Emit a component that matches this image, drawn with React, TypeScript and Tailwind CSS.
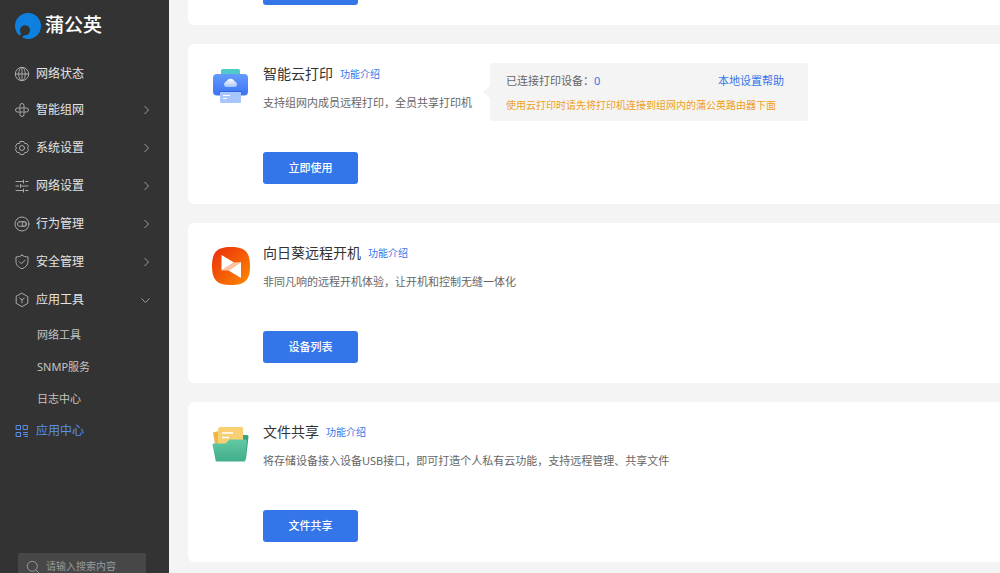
import { type ReactNode } from "react"

interface IconProps {
  children: ReactNode
}

interface NavItem {
  label: string
  icon: ReactNode
  arrow?: "right" | "down"
}

interface AppCardProps {
  icon: ReactNode
  title: string
  desc: string
  action: string
  children?: ReactNode
}

function LineIcon({ children }: IconProps) {
  return (
    <svg
      viewBox="0 0 16 16"
      className="size-4 shrink-0"
      fill="none"
      stroke="currentColor"
      strokeWidth="1"
      strokeLinecap="round"
      strokeLinejoin="round"
      aria-hidden="true"
    >
      {children}
    </svg>
  )
}

const navItems: NavItem[] = [
  {
    label: "智能组网",
    arrow: "right",
    icon: (
      <LineIcon>
        <path d="M6 8.500V3.500a2 2 0 0 1 4 0V6M7.500 6h5a2 2 0 0 1 0 4H10M10 7.500v5a2 2 0 0 1-4 0V10M8.500 10h-5a2 2 0 0 1 0-4H6" />
      </LineIcon>
    ),
  },
  {
    label: "系统设置",
    arrow: "right",
    icon: (
      <LineIcon>
        <path d="M6.300 1.500h3.400l1 2 2.200.1 1.700 2.900-1.200 1.500 1.200 1.500-1.700 2.900-2.200.1-1 2H6.300l-1-2-2.200-.1-1.700-2.900L2.600 8 1.400 6.500l1.700-2.900 2.200-.1z" />
        <circle cx="8" cy="8" r="2.500" />
      </LineIcon>
    ),
  },
  {
    label: "网络设置",
    arrow: "right",
    icon: (
      <LineIcon>
        <path d="M2 3.500h7M11.500 3.500H14M9.500 2v3M2 8h2.500M7 8h7M6.500 6.500v3M2 12.500h7M11.500 12.500H14M9.500 11v3" />
      </LineIcon>
    ),
  },
  {
    label: "行为管理",
    arrow: "right",
    icon: (
      <LineIcon>
        <circle cx="8" cy="8" r="7" />
        <rect x="3.500" y="5.700" width="9" height="4.600" rx="2.300" />
        <circle cx="10.200" cy="8" r="2.200" />
      </LineIcon>
    ),
  },
  {
    label: "安全管理",
    arrow: "right",
    icon: (
      <LineIcon>
        <path d="M8 1.200c1.600 1.200 3.600 1.700 6 1.700v4.600c0 3.400-2.200 5.800-6 7.300-3.800-1.500-6-3.900-6-7.300V2.900c2.400 0 4.400-.5 6-1.700z" />
        <path d="M5.400 7.800l2 2L11 6.200" />
      </LineIcon>
    ),
  },
  {
    label: "应用工具",
    arrow: "down",
    icon: (
      <LineIcon>
        <path d="M8 1.300l5.800 3.300v6.800L8 14.700l-5.800-3.300V4.600z" />
        <path d="M5.800 6.200L8 7.800l2.200-1.600M8 7.800v3" />
      </LineIcon>
    ),
  },
]

const subItems = ["网络工具", "SNMP服务", "日志中心"]

function Arrow({ dir }: { dir: "right" | "down" }) {
  return (
    <svg
      viewBox="0 0 10 10"
      className="ml-auto size-[10px]"
      fill="none"
      stroke="#a0a0a0"
      aria-hidden="true"
    >
      {dir === "right" ? <path d="M3.500 1l4 4-4 4" /> : <path d="M0.500 3.500l4 4 4-4" />}
    </svg>
  )
}

function NavLink({ label, icon, arrow }: NavItem) {
  return (
    <a href="#" className="flex h-full items-center pr-[18px] pl-[14px]">
      <span className="text-[#aaaaaa]">{icon}</span>
      <span className="ml-[6px]">{label}</span>
      {arrow && <Arrow dir={arrow} />}
    </a>
  )
}

function Sidebar() {
  return (
    <aside className="flex w-[169px] shrink-0 flex-col bg-[#333333] text-xs text-[#e4e4e4]">
      <div className="flex h-14 shrink-0 items-center gap-1 pb-1 pl-[15px]">
        <svg viewBox="0 0 26 26" className="size-[26px]" aria-hidden="true">
          <path
            fill="#0d80e0"
            d="M3.200 21.500A13 13 0 1 1 8.300 25.100C7.300 24.600 7.800 22.500 9.500 22.300A5 5 0 1 0 5.200 18.500C5.400 20 6.300 20.800 5.800 21.600C5.200 22.600 3.900 22.300 3.200 21.500Z"
          />
        </svg>
        <span className="text-[19px] font-medium text-white">蒲公英</span>
      </div>

      <nav className="shrink-0">
        <ul>
          <li className="h-[35px]">
            <NavLink
              label="网络状态"
              icon={
                <LineIcon>
                  <circle cx="8" cy="8" r="6.700" />
                  <ellipse cx="8" cy="8" rx="3.300" ry="6.700" />
                  <path d="M1.300 8h13.400M8 1.300v13.400" />
                </LineIcon>
              }
            />
          </li>
          {navItems.map((item) => (
            <li key={item.label} className="h-[38px]">
              <NavLink {...item} />
            </li>
          ))}
          {subItems.map((label) => (
            <li key={label} className="h-8">
              <a href="#" className="flex h-full items-center pl-[37px] text-[11px] text-[#c4c4c4]">
                {label}
              </a>
            </li>
          ))}
          <li className="h-8">
            <a href="#" className="flex h-full items-center pl-[14px] text-[#5a8ff0]">
              <LineIcon>
                <path d="M2.500 2.500h4v4h-4zM9.500 2.500h4v4h-4zM2.500 9.500h4v4h-4zM9.500 9.500h4M9.500 11.500h4M11 13.500h2.500" />
              </LineIcon>
              <span className="ml-[6px]">应用中心</span>
            </a>
          </li>
        </ul>
      </nav>

      <label className="mt-[106px] ml-[18px] flex h-7 w-32 shrink-0 items-center gap-[6px] rounded-xs bg-[#474747] pl-2">
        <svg
          viewBox="0 0 14 14"
          className="size-[14px] shrink-0"
          fill="none"
          stroke="#9a9a9a"
          aria-hidden="true"
        >
          <circle cx="6.300" cy="6.300" r="5" />
          <path d="M10 10l3 3" />
        </svg>
        <input
          type="search"
          aria-label="搜索"
          placeholder="请输入搜索内容"
          className="w-full min-w-0 bg-transparent text-[10px] outline-none placeholder:text-[#9a9a9a]"
        />
      </label>
    </aside>
  )
}

function AppCard({ icon, title, desc, action, children }: AppCardProps) {
  return (
    <section className="flex items-start rounded-l-md bg-white pt-[19px] pb-5 pl-6">
      <div className="mt-1 mr-[13px] shrink-0">{icon}</div>
      <div>
        <div className="flex items-center gap-[7px]">
          <h2 className="text-sm leading-[22px] text-[#333333]">{title}</h2>
          <a href="#" className="text-[10px] text-[#3575e8]">
            功能介绍
          </a>
        </div>
        <p className="mt-[9px] text-[11px] leading-[18px] text-[#666666]">{desc}</p>
        <button className="mt-10 h-8 w-[95px] rounded-[3px] bg-[#3575ea] text-[11px] font-medium text-white">
          {action}
        </button>
      </div>
      {children}
    </section>
  )
}

function PrinterIcon() {
  return (
    <svg viewBox="0 0 38 40" className="h-10 w-[38px]" aria-hidden="true">
      <defs>
        <linearGradient id="printerBody" x1="0" y1="0" x2="0" y2="1">
          <stop offset="0" stopColor="#649bfd" />
          <stop offset="1" stopColor="#3b73f3" />
        </linearGradient>
        <linearGradient id="printerCloud" x1="0" y1="0" x2="0" y2="1">
          <stop offset="0" stopColor="#ffffff" />
          <stop offset="1" stopColor="#a5c4fe" />
        </linearGradient>
      </defs>
      <rect x="9" y="2" width="19" height="9" rx="1.500" fill="#4ecbc9" />
      <rect x="1" y="7" width="35" height="21.500" rx="4" fill="url(#printerBody)" />
      <path
        fill="url(#printerCloud)"
        d="M14.500 20a2.700 2.700 0 0 1-.8-5.200c.8-.4 1.300-1 1.800-1.700a3.800 3.800 0 0 1 6 0c.5.7 1 1.300 1.800 1.700a2.700 2.700 0 0 1-.8 5.200z"
      />
      <rect x="7" y="24" width="23" height="2" rx="1" fill="#2f63e0" />
      <path d="M8 25h21v10a1 1 0 0 1-1 1H9a1 1 0 0 1-1-1z" fill="#a9c5fe" />
      <path d="M11 28.500h7M11 31.500h4" stroke="#ffffff" />
    </svg>
  )
}

function SunflowerIcon() {
  return (
    <svg viewBox="0 0 38 40" className="h-10 w-[38px]" aria-hidden="true">
      <defs>
        <linearGradient id="sunBg" x1="0" y1="0" x2="1" y2="1">
          <stop offset="0" stopColor="#ea2a0c" />
          <stop offset="1" stopColor="#ff8a00" />
        </linearGradient>
      </defs>
      <path
        fill="url(#sunBg)"
        d="M19 1c14 0 19 5 19 19s-5 19-19 19S0 34 0 20 5 1 19 1z"
      />
      <path d="M9.500 9L22 16.500 9.500 24.500z" fill="#ffffff" />
      <path d="M29 16v16L16.500 24.500z" fill="#ffffff" />
      <path d="M9.500 24.500L22 16.500l7-.5-12.500 8.500z" fill="#ffc4a4" />
    </svg>
  )
}

function FolderIcon() {
  return (
    <svg viewBox="0 0 38 40" className="h-10 w-[38px]" aria-hidden="true">
      <defs>
        <linearGradient id="folderFront" x1="0" y1="0" x2="0" y2="1">
          <stop offset="0" stopColor="#62c9a2" />
          <stop offset="1" stopColor="#41ad8c" />
        </linearGradient>
      </defs>
      <path d="M22 10h13a1.500 1.500 0 0 1 1.500 1.700L34 34H22z" fill="#36a07f" />
      <path d="M1 7.500L7 6v13H3z" fill="#f0b548" />
      <path d="M6 3.500L8 2h22a1 1 0 0 1 1 1v17H6z" fill="#f8cf72" />
      <path d="M10 8h11M10 12.500h7" stroke="#ffffff" strokeWidth="1.500" />
      <path
        fill="url(#folderFront)"
        d="M1.500 18.500h12l4-4h16a1.300 1.300 0 0 1 1.400 1.500L33.500 35a1.500 1.500 0 0 1-1.500 1.500H5A1.500 1.500 0 0 1 3.500 35L.5 19.500a1 1 0 0 1 1-1z"
      />
    </svg>
  )
}

export default function App() {
  return (
    <div className="flex h-screen overflow-hidden bg-[#f4f4f4] font-['Noto_Sans','Noto_Sans_CJK_SC',sans-serif]">
      <Sidebar />
      <main className="flex min-w-0 flex-1 flex-col gap-[19px] pl-[19px]">
        {/* tail of the card scrolled above the window */}
        <section className="rounded-bl-md bg-white pb-5 pl-[75px]">
          <div className="flex h-[5px] items-end overflow-hidden">
            <button aria-label="立即使用" className="h-8 w-[95px] shrink-0 rounded-[3px] bg-[#3575ea]" />
          </div>
        </section>

        <AppCard
          icon={<PrinterIcon />}
          title="智能云打印"
          desc="支持组网内成员远程打印，全员共享打印机"
          action="立即使用"
        >
          <div className="relative ml-[18px] flex w-[318px] flex-col gap-[6px] rounded-xs bg-[#f4f4f4] pt-[9px] pr-6 pb-[7px] pl-4 text-[11px] leading-[18px] text-[#666666]">
            <span className="absolute top-[23px] -left-[7px] border-y-[6px] border-r-[7px] border-y-transparent border-r-[#f4f4f4]" />
            <div className="flex justify-between">
              <span>
                已连接打印设备：<span className="text-[#3575e8]">0</span>
              </span>
              <a href="#" className="text-[#3575e8]">
                本地设置帮助
              </a>
            </div>
            <p className="text-[10px] whitespace-nowrap text-[#f0a020]">
              使用云打印时请先将打印机连接到组网内的蒲公英路由器下面
            </p>
          </div>
        </AppCard>

        <AppCard
          icon={<SunflowerIcon />}
          title="向日葵远程开机"
          desc="非同凡响的远程开机体验，让开机和控制无缝一体化"
          action="设备列表"
        />

        <AppCard
          icon={<FolderIcon />}
          title="文件共享"
          desc="将存储设备接入设备USB接口，即可打造个人私有云功能，支持远程管理、共享文件"
          action="文件共享"
        />
      </main>
    </div>
  )
}
